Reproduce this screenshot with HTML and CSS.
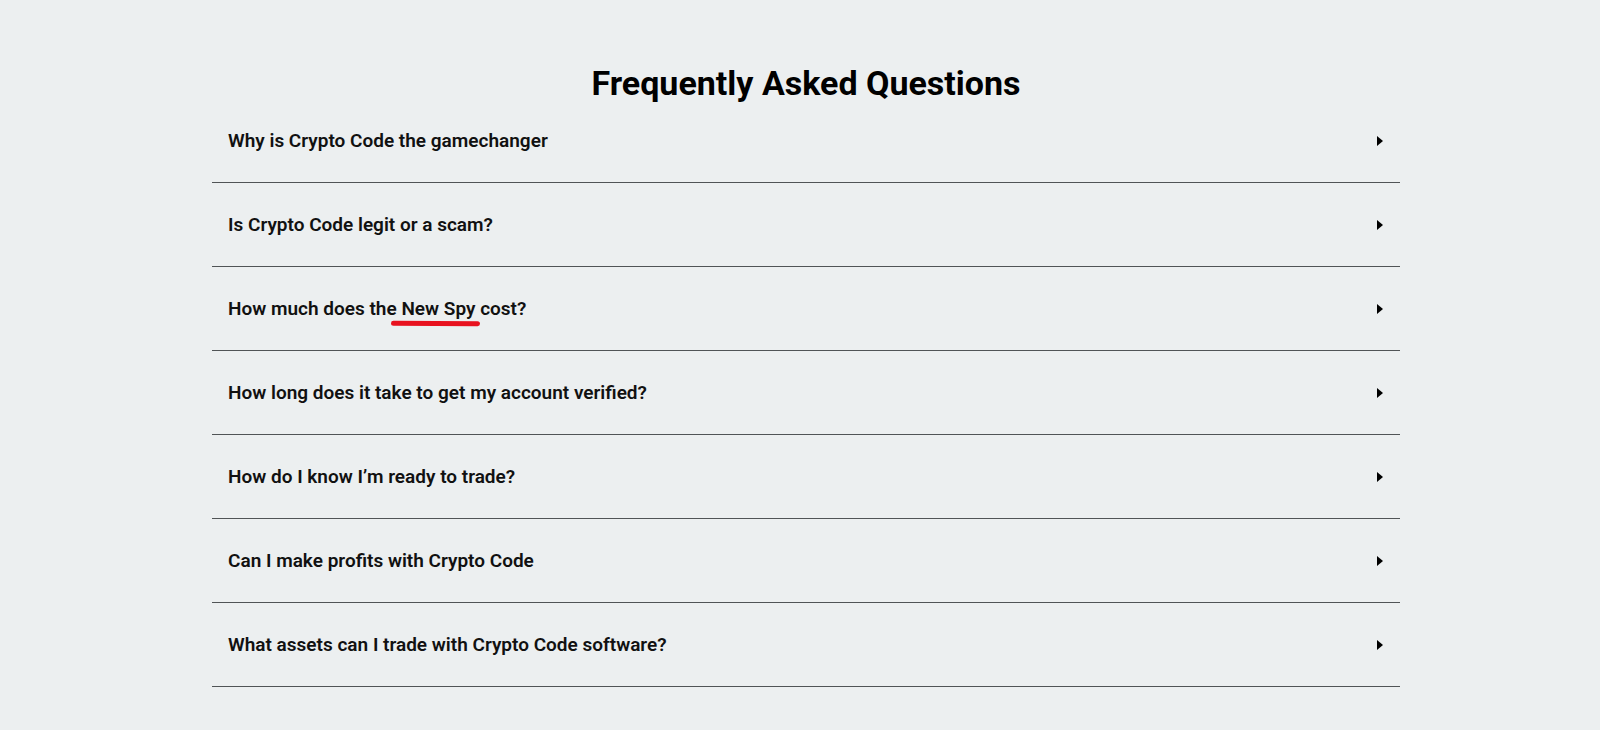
FILE: index.html
```html
<!DOCTYPE html>
<html lang="en">
<head>
<meta charset="utf-8">
<title>FAQ</title>
<link rel="stylesheet" href="styles.css">
</head>
<body>
<section class="faq">
  <h1 class="faq-title">Frequently Asked Questions</h1>
  <div class="faq-list">
    <div class="faq-item"><span class="faq-q">Why is Crypto Code the gamechanger</span><span class="faq-arrow"></span></div>
    <div class="faq-item"><span class="faq-q">Is Crypto Code legit or a scam?</span><span class="faq-arrow"></span></div>
    <div class="faq-item"><span class="faq-q">How much does the <span class="mark">New Spy</span> cost?</span><span class="faq-arrow"></span></div>
    <div class="faq-item"><span class="faq-q">How long does it take to get my account verified?</span><span class="faq-arrow"></span></div>
    <div class="faq-item"><span class="faq-q">How do I know I’m ready to trade?</span><span class="faq-arrow"></span></div>
    <div class="faq-item"><span class="faq-q">Can I make profits with Crypto Code</span><span class="faq-arrow"></span></div>
    <div class="faq-item"><span class="faq-q">What assets can I trade with Crypto Code software?</span><span class="faq-arrow"></span></div>
  </div>
</section>
</body>
</html>
```
FILE: styles.css
```css
html, body {
  margin: 0;
  padding: 0;
  background: #eceff0;
}
body {
  font-family: Roboto, "Liberation Sans", Arial, sans-serif;
  color: #111;
}
.faq {
  width: 1188px;
  margin: 0 200px 0 212px;
  padding-top: 68px;
}
.faq-title {
  margin: 0;
  text-align: center;
  font-size: 34px;
  line-height: 31px;
  font-weight: 700;
  color: #000;
}
.faq-list {
  display: flex;
  flex-direction: column;
}
.faq-item {
  height: 83px;
  display: flex;
  align-items: center;
  justify-content: space-between;
  padding: 0 17px 0 16px;
  border-bottom: 1px solid #505456;
}
.faq-q {
  font-size: 19px;
  font-weight: 600;
  color: #111;
}
.mark {
  position: relative;
}
.mark::after {
  content: "";
  position: absolute;
  left: -10px;
  right: -5px;
  top: 24px;
  height: 5px;
  border-radius: 3px;
  background: #e8121f;
  transform: rotate(0.3deg);
}
.faq-arrow {
  width: 0;
  height: 0;
  border-left: 6px solid #000;
  border-top: 5px solid transparent;
  border-bottom: 5px solid transparent;
}
```
